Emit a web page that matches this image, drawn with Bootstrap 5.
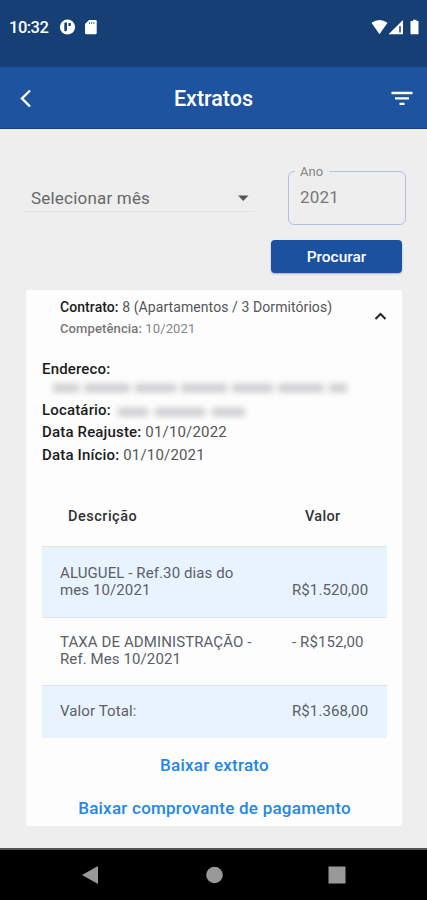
<!DOCTYPE html>
<html lang="pt-BR">
<head>
<meta charset="utf-8">
<meta name="viewport" content="width=device-width, initial-scale=1">
<title>Extratos</title>
<link href="https://cdn.jsdelivr.net/npm/bootstrap@5.3.0/dist/css/bootstrap.min.css" rel="stylesheet">
<style>
  body { font-family: Roboto, "Liberation Sans", sans-serif; background: #eee; color: #555; height: 900px; overflow: hidden; letter-spacing: .3px; }
  svg { display: block; flex: none; }
  b { font-weight: 500; color: #1c1c1c; }
  .status { height: 67px; background: #163f75; padding: 18px 7px 0 9px; font-size: 16.5px; line-height: 20px; letter-spacing: -.5px; font-weight: 500; }
  .status .globe { margin-left: 11px; }
  .status .sd { margin-left: 8px; }
  .appbar { height: 62px; background: #1e549f; border-bottom: 1px solid #12417f; padding: 0 14px 0 18px; }
  .appbar h1 { font-size: 21.5px; font-weight: 500; letter-spacing: 0; line-height: 30px; padding: 3px 0 0 2px; }
  .filters { padding: 42px 21px 0 24px; height: 95px; }
  .month { width: 231px; height: 41px; border-bottom: 1px solid #e2e2e2; padding: 15px 6px 0 7px; font-size: 17px; line-height: 24px; letter-spacing: .2px; color: #686868; }
  .year { width: 118px; height: 54px; border: 1.5px solid #b3c0dc; border-radius: 6px; padding: 14px 11px; font-size: 17px; line-height: 22px; letter-spacing: .2px; color: #777; }
  .year label { position: absolute; top: -8px; left: 6px; padding: 0 6px 0 5px; background: #eee; font-size: 13px; line-height: 16px; letter-spacing: 0; color: #858585; }
  .find { width: 131px; height: 33px; margin: 16px 25px 0 auto; background: #1b519e; border-radius: 4px; font-size: 15.5px; font-weight: 500; letter-spacing: 0; padding: 2px 0 0; border: 0; box-shadow: 0 1px 2px #0004; }
  .find:hover { background: #1b519e; }
  .sheet { width: 376px; height: 536px; margin: 17px 0 0 26px; background: #fdfdfe; border-radius: 2px; padding: 6px 15px 0 16px; }
  .head { padding-left: 18px; height: 62px; font-size: 14px; line-height: 22px; }
  .head .contract { letter-spacing: .08px; }
  .head .period { font-size: 13px; letter-spacing: .12px; color: #858585; }
  .head .period b { color: #777; }
  .head svg { margin: 15px 0 0 0; }
  .facts { font-size: 15px; line-height: 22.7px; height: 148px; letter-spacing: .17px; }
  .facts .street { height: 18px; padding-left: 11px; gap: 5px; }
  .facts .tenant { gap: 7px; }
  .veil { display: block; height: 11px; background: linear-gradient(#fff0 12%, #c9c9cb 45%, #c9c9cb); filter: blur(3px); }
  .w18{width:18px}.w26{width:26px}.w30{width:30px}.w33{width:33px}.w36{width:36px}.w41{width:41px}.w46{width:46px}.w50{width:50px}
  .thead-row { height: 40px; font-size: 14.5px; font-weight: 500; color: #333; padding-left: 26px; }
  .thead-row .what { letter-spacing: .5px; }
  .thead-row .amount { padding-left: 13px; }
  .line { border-top: 1px solid #e0e3ea; padding: 0 0 0 18px; font-size: 15px; line-height: 17.3px; letter-spacing: .1px; color: #5a5f66; }
  .line .what, .thead-row .what { flex: 1; }
  .amount { width: 95px; flex: none; }
  .tinted { background: #e9f3fe; }
  .r1 { height: 71px; padding-top: 18px; }
  .r2 { height: 68px; padding-top: 16px; }
  .r3 { height: 53px; padding-top: 17px; }
  .actions { padding-top: 6px; }
  .action { font-size: 17px; font-weight: 500; color: #2387e5; line-height: 42.5px; letter-spacing: .24px; }
  .sysnav { height: 52px; background: #000; border-top: 2px solid #555; }
</style>
<script src="https://cdn.jsdelivr.net/npm/bootstrap@5.3.0/dist/js/bootstrap.bundle.min.js"></script>
</head>
<body class="d-flex flex-column">
  <div class="status d-flex align-items-start text-white">
    <span>10:32</span>
    <svg class="globe" width="17" height="18" viewBox="0 0 17 18"><circle cx="8.5" cy="9" r="7.6" fill="#fff"/><path d="M5.300 5.500Q5.300 4.500 6.300 4.500H8V12.500L6 13.500 5.300 12.500zM9.500 5H11.800V8H9.500z" fill="#163f75"/></svg>
    <svg class="sd" width="14" height="18" viewBox="0 0 14 18"><path d="M5 2h6.500Q12.700 2 12.700 3.200V15q0 1.200-1.200 1.200h-9Q1 16.200 1 15V6z" fill="#fff"/><path d="M5.500 4v2M7.700 4v2M9.900 4v2" stroke="#56749c"/></svg>
    <svg class="ms-auto" width="50" height="18" viewBox="0 0 50 18"><path d="M1.500 4.800Q9.500-.8 17.500 4.800L9.500 16.300z" fill="#fff"/><path d="M33 2v14.300H18.500z" fill="#fff"/><path d="M30 8v6.500" stroke="#163f75" stroke-width="1.500"/><path d="M41 3h2V1.700h3.500V3h2v13.300H40.500V3z" fill="#fff"/></svg>
  </div>
  <header class="appbar d-flex align-items-center justify-content-between text-white">
    <svg width="16" height="22" viewBox="0 0 16 22"><path d="M12 3.500L4 11.500l8 8" fill="none" stroke="#fff" stroke-width="2.400"/></svg>
    <h1 class="m-0">Extratos</h1>
    <svg width="22" height="20" viewBox="0 0 22 20"><path d="M.5 5h21M4 10.300h14M8.500 15.800h5" stroke="#fff" stroke-width="2.300"/></svg>
  </header>
  <main class="flex-grow-1">
    <div class="filters d-flex justify-content-between">
      <div class="month d-flex justify-content-between"><span>Selecionar mês</span><svg width="12" height="24" viewBox="0 0 12 24"><path d="M1 9.500h10.500L6.200 15z" fill="#555"/></svg></div>
      <div class="year position-relative"><label>Ano</label>2021</div>
    </div>
    <button class="find btn btn-primary d-block">Procurar</button>
    <section class="sheet">
      <div class="head d-flex justify-content-between">
        <div class="text-nowrap"><div class="contract"><b>Contrato:</b> 8 (Apartamentos / 3 Dormitórios)</div><div class="period"><b>Competência:</b> 10/2021</div></div>
        <svg width="13" height="10" viewBox="0 0 13 10"><path d="M1.500 8l5-5 5 5" fill="none" stroke="#222" stroke-width="2"/></svg>
      </div>
      <div class="facts">
        <div><b>Endereco:</b></div>
        <div class="street d-flex"><i class="veil w26"></i><i class="veil w46"></i><i class="veil w41"></i><i class="veil w46"></i><i class="veil w41"></i><i class="veil w46"></i><i class="veil w18"></i></div>
        <div class="tenant d-flex align-items-center"><b>Locatário:</b><i class="veil w30"></i><i class="veil w50"></i><i class="veil w33"></i></div>
        <div><b>Data Reajuste:</b> 01/10/2022</div>
        <div><b>Data Início:</b> 01/10/2021</div>
      </div>
      <div class="thead-row d-flex"><span class="what">Descrição</span><span class="amount">Valor</span></div>
      <div class="line tinted r1 d-flex"><span class="what">ALUGUEL - Ref.30 dias do<br>mes 10/2021</span><span class="amount"><br>R$1.520,00</span></div>
      <div class="line r2 d-flex"><span class="what">TAXA DE ADMINISTRAÇÃO -<br>Ref. Mes 10/2021</span><span class="amount">- R$152,00</span></div>
      <div class="line tinted r3 d-flex"><span class="what">Valor Total:</span><span class="amount">R$1.368,00</span></div>
      <div class="actions text-center">
        <div class="action">Baixar extrato</div>
        <div class="action">Baixar comprovante de pagamento</div>
      </div>
    </section>
  </main>
  <nav class="sysnav d-flex justify-content-center align-items-center">
    <svg width="264" height="20" viewBox="0 0 264 20"><path d="M0 10L16 1v18z" fill="#999"/><circle cx="132.500" cy="10" r="8.300" fill="#999"/><rect x="246.500" y="1.500" width="17" height="17" fill="#999"/></svg>
  </nav>
</body>
</html>
